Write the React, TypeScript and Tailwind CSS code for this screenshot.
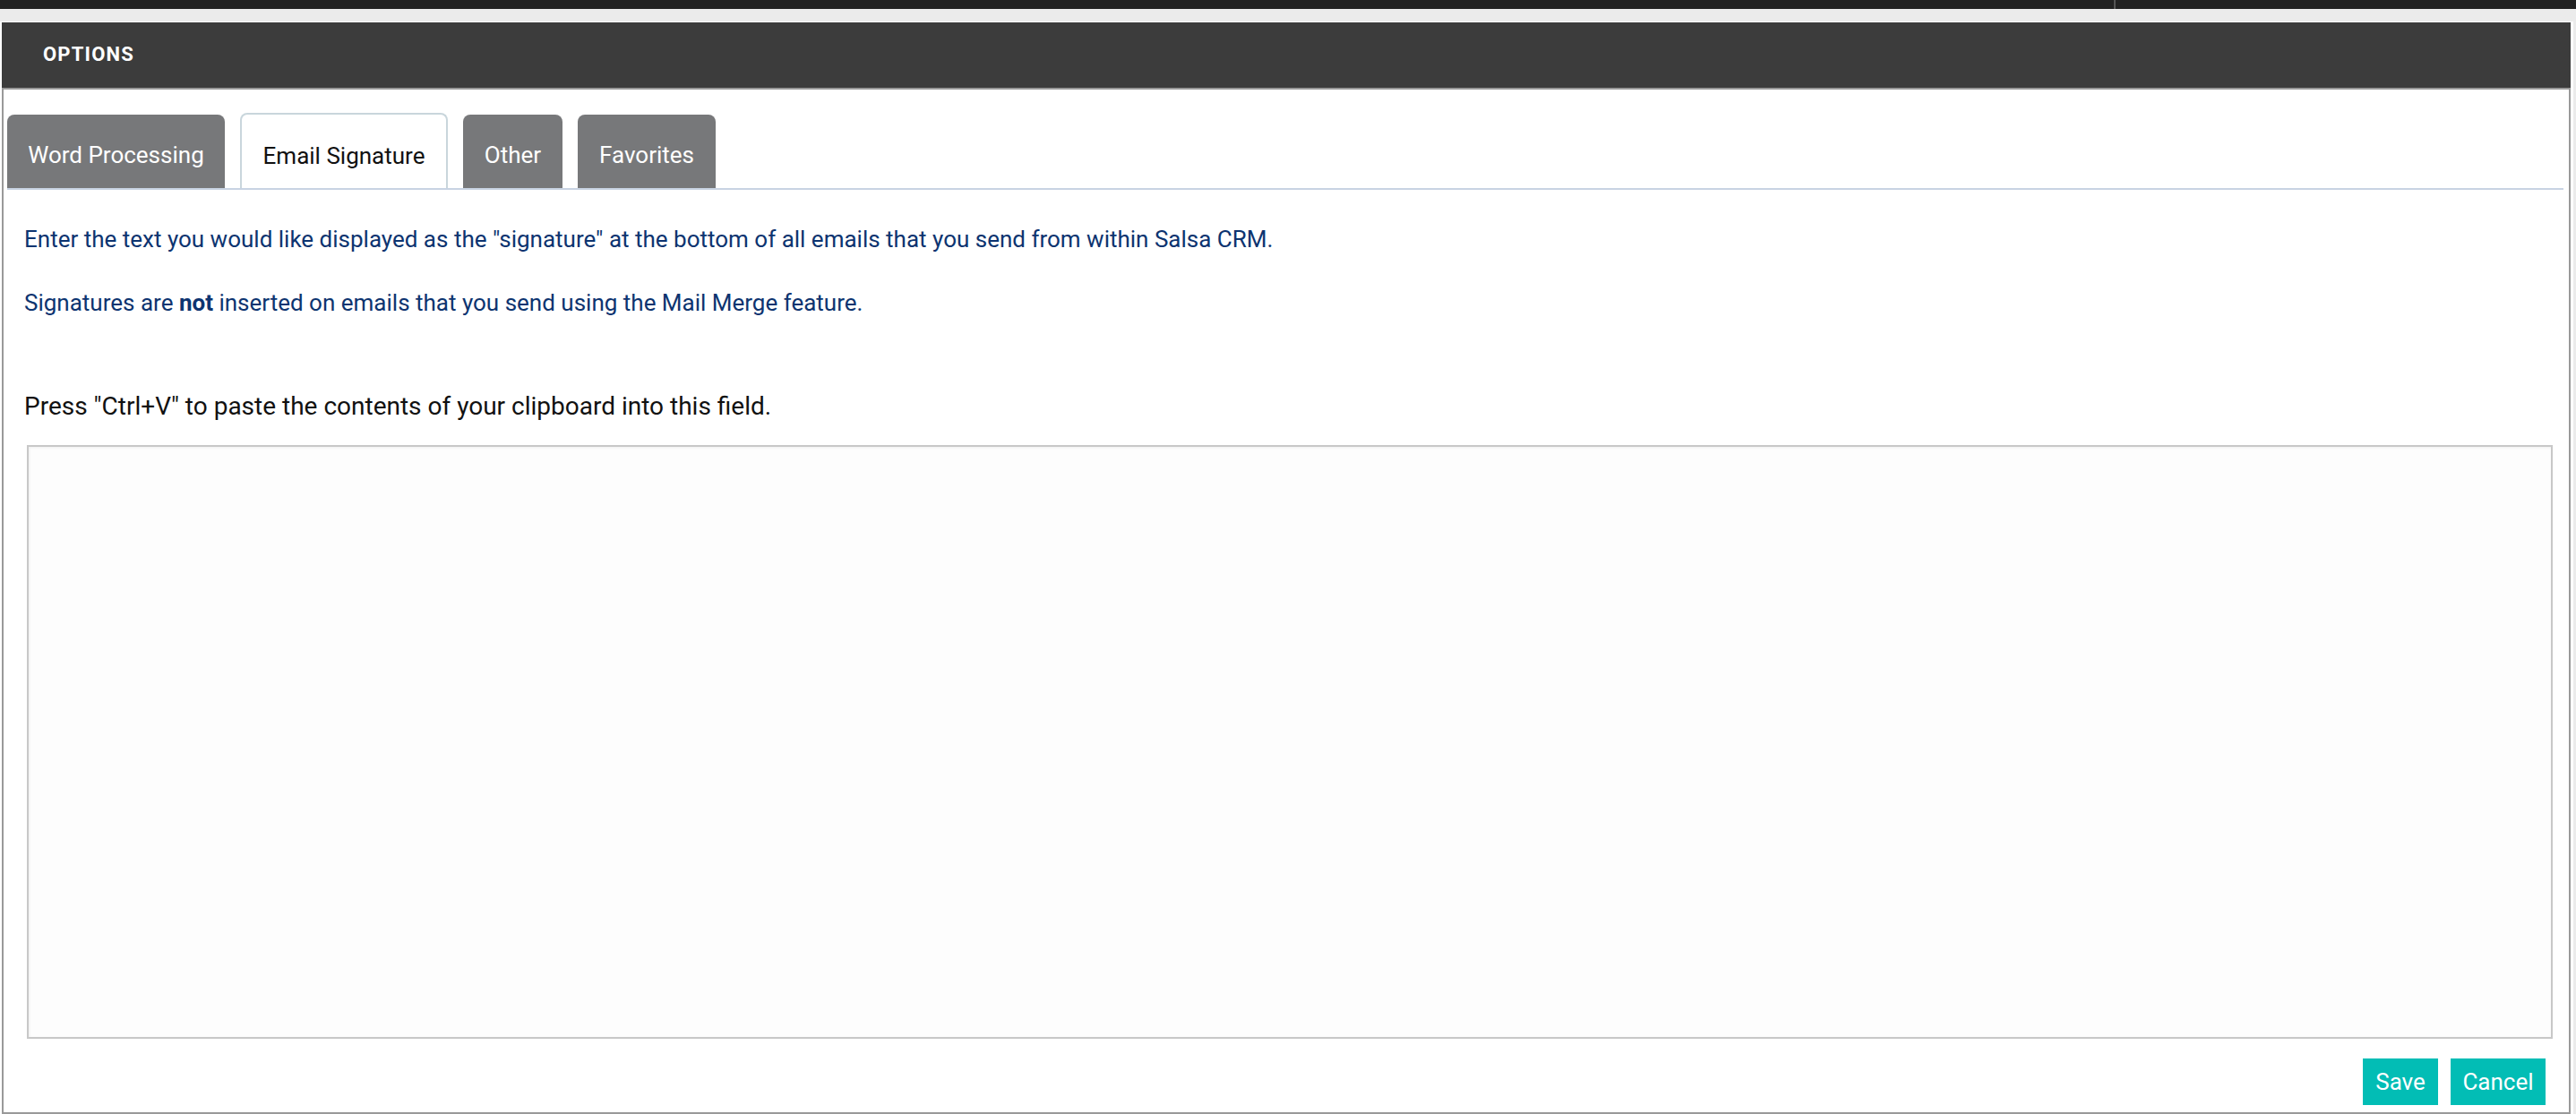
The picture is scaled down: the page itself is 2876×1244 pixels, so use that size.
export default function App() {
  const font = { fontFamily: "Roboto, 'Liberation Sans', sans-serif" };
  const tabs = [
    { label: "Word Processing", w: "w-[243px]", active: false },
    { label: "Email Signature", w: "w-[232px]", active: true },
    { label: "Other", w: "w-[111px]", active: false },
    { label: "Favorites", w: "w-[154px]", active: false },
  ];

  return (
    <div className="h-[1244px] w-[2876px] overflow-hidden bg-[#ebebeb]" style={font}>
      {/* top strip */}
      <div className="flex h-[10px] bg-[#222222]">
        <div className="w-[2360px]" />
        <div className="w-[2px] bg-[#555555]" />
      </div>
      <div className="h-[14px]" />

      {/* options panel */}
      <div className="flex h-[1220px] w-[2873px] flex-col bg-white pl-[2px] pr-[3px] pt-[1px]">
        <div className="flex h-[73px] shrink-0 items-center bg-[#3c3c3c] pb-[3px] pl-[46px]">
          <span className="text-[22px] font-bold tracking-[1.2px] text-white">OPTIONS</span>
        </div>

        <div className="flex flex-1 flex-col border-2 border-[#999999] pb-[8px]">
          {/* tabs */}
          <div className="ml-[4px] mr-[6px] mt-[26px] flex items-end gap-[17px] border-b-2 border-[#c8d3e3]">
            {tabs.map((t) =>
              t.active ? (
                <div
                  key={t.label}
                  className={`${t.w} flex h-[84px] items-center justify-center rounded-t-[8px] border-2 border-b-0 border-[#c9d6dc] bg-white pt-[10px] text-[26px] text-[#111111]`}
                >
                  {t.label}
                </div>
              ) : (
                <div
                  key={t.label}
                  className={`${t.w} flex h-[82px] items-center justify-center rounded-t-[8px] bg-[#77787a] pt-[8px] text-[26px] text-white`}
                >
                  {t.label}
                </div>
              )
            )}
          </div>

          {/* body */}
          <div className="px-[23px]">
            <p className="mt-[37px] text-[26px] leading-[36px] text-[#0d3470]">
              Enter the text you would like displayed as the "signature" at the bottom of all emails that you send from within Salsa CRM.
            </p>
            <p className="mt-[35px] text-[26px] leading-[36px] text-[#0d3470]">
              Signatures are <b className="font-bold">not</b> inserted on emails that you send using the Mail Merge feature.
            </p>
            <p className="mt-[80px] text-[28px] leading-[36px] text-[#111111]">
              Press "Ctrl+V" to paste the contents of your clipboard into this field.
            </p>
          </div>

          <textarea
            className="ml-[26px] mr-[18px] mt-[25px] h-[663px] shrink-0 resize-none border-2 border-[#c8c8c8] bg-[#fdfdfd] shadow-[inset_1px_1px_3px_rgba(0,0,0,0.06)] outline-none"
          />

          <div className="mt-[22px] flex justify-end gap-[14px] pr-[26px]">
            <button className="h-[52px] w-[84px] bg-[#02bdb5] text-[26px] text-white">Save</button>
            <button className="h-[52px] w-[106px] bg-[#02bdb5] text-[26px] text-white">Cancel</button>
          </div>
        </div>
      </div>
    </div>
  );
}
